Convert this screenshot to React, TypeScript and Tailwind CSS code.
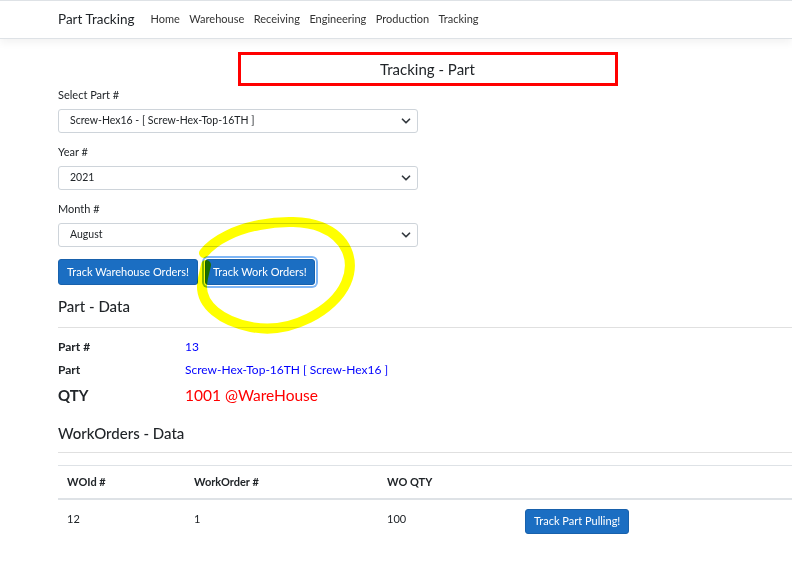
import { ChevronDown } from 'lucide-react';

const NAV_LINKS = ['Home', 'Warehouse', 'Receiving', 'Engineering', 'Production', 'Tracking'];

const SelectBox = ({ label, value }: { label: string; value: string }) => (
    <div className="flex flex-col">
        <label className="text-[11px] text-[#212529] leading-none mb-[9px]">{label}</label>
        <div className="w-[360px] h-[24px] flex items-center justify-between border border-[#ced4da] rounded-[3px] pl-[11px] pr-[4px] text-[10.5px] text-[#212529] bg-white">
            <span>{value}</span>
            <ChevronDown size={14} strokeWidth={3} className="text-[#343a40]" />
        </div>
    </div>
);

const App = () => {
    return (
        <div
            className="w-[792px] h-[561px] overflow-hidden bg-white text-[#212529]"
            style={{ fontFamily: 'Lato, "Open Sans", sans-serif' }}
        >
            {/* Navbar */}
            <nav className="h-[39px] border-t border-b border-[#dee2e6] bg-white flex items-center pl-[58px] shadow-[0_4px_8px_rgba(0,0,0,0.05)]">
                <span className="text-[13.5px] text-[#212529] mr-[16px]">Part Tracking</span>
                <div className="flex gap-[9.5px]">
                    {NAV_LINKS.map((l) => (
                        <span key={l} className="text-[11px] text-[#333]">
                            {l}
                        </span>
                    ))}
                </div>
            </nav>

            <main className="ml-[58px] w-[739px] relative">
                {/* Title */}
                <div className="flex justify-center mt-[13px]">
                    <div className="w-[380px] h-[34px] border-[3px] border-[#ff0000] flex items-center justify-center text-[15px] text-[#212529]">
                        Tracking - Part
                    </div>
                </div>

                {/* Filters */}
                <div className="flex flex-col gap-[13px] mt-[3px]">
                    <SelectBox label="Select Part #" value="Screw-Hex16 - [ Screw-Hex-Top-16TH ]" />
                    <SelectBox label="Year #" value="2021" />
                    <SelectBox label="Month #" value="August" />
                </div>

                <div className="flex gap-[7px] mt-[12px]">
                    <button className="h-[26px] px-[8px] rounded-[3px] bg-[#1b6ec2] border border-[#1861ac] text-white text-[11px]">
                        Track Warehouse Orders!
                    </button>
                    <button className="h-[26px] px-[7px] rounded-[3px] bg-[#1b6ec2] border border-[#1861ac] text-white text-[11px] shadow-[0_0_0_1px_#fff,0_0_0_3px_#7fb6f5]">
                        Track Work Orders!
                    </button>
                </div>

                {/* Part data */}
                <h4 className="text-[15px] font-medium mt-[14px] leading-none">Part - Data</h4>
                <hr className="border-[#e0e0e0] mt-[13px]" />
                <div className="grid grid-cols-[127px_1fr] gap-y-[5px] mt-[10px] items-center">
                    <span className="text-[12px] font-bold">Part #</span>
                    <span className="text-[12px] text-[#0000ff]">13</span>
                    <span className="text-[12px] font-bold">Part</span>
                    <span className="text-[12px] text-[#0000ff]">Screw-Hex-Top-16TH [ Screw-Hex16 ]</span>
                    <span className="text-[15px] font-bold">QTY</span>
                    <span className="text-[15.5px] text-[#ff0000]">1001 @WareHouse</span>
                </div>

                {/* Work orders */}
                <h4 className="text-[15px] font-medium mt-[19px] leading-none">WorkOrders - Data</h4>
                <hr className="border-[#e0e0e0] mt-[11px]" />
                <table className="w-full mt-[12px] border-t border-[#dee2e6] text-[11px]">
                    <thead>
                        <tr className="border-b-2 border-[#dee2e6] h-[33px]">
                            <th className="text-left font-bold pl-[9px] w-[127px]">WOId #</th>
                            <th className="text-left font-bold pl-[9px] w-[193px]">WorkOrder #</th>
                            <th className="text-left font-bold pl-[9px] w-[138px]">WO QTY</th>
                            <th />
                        </tr>
                    </thead>
                    <tbody>
                        <tr className="h-[40px]">
                            <td className="pl-[9px]">12</td>
                            <td className="pl-[9px]">1</td>
                            <td className="pl-[9px]">100</td>
                            <td className="pl-[9px] pt-[4px]">
                                <button className="h-[25px] px-[8px] rounded-[3px] bg-[#1b6ec2] border border-[#1861ac] text-white text-[11px]">
                                    Track Part Pulling!
                                </button>
                            </td>
                        </tr>
                    </tbody>
                </table>

                {/* Highlighter annotation */}
                <svg
                    className="absolute left-[138px] top-[163px] mix-blend-multiply pointer-events-none"
                    width="170"
                    height="130"
                    viewBox="0 0 170 130"
                >
                    <path
                        d="M8 38 C 30 10, 95 0, 125 12 C 150 22, 160 45, 150 68 C 138 95, 95 120, 55 112 C 25 106, 5 90, 6 70 C 7 60, 9 55, 10 50"
                        fill="none"
                        stroke="#ffff00"
                        strokeWidth="10"
                        strokeLinecap="round"
                    />
                </svg>
            </main>
        </div>
    );
};

export default App;
